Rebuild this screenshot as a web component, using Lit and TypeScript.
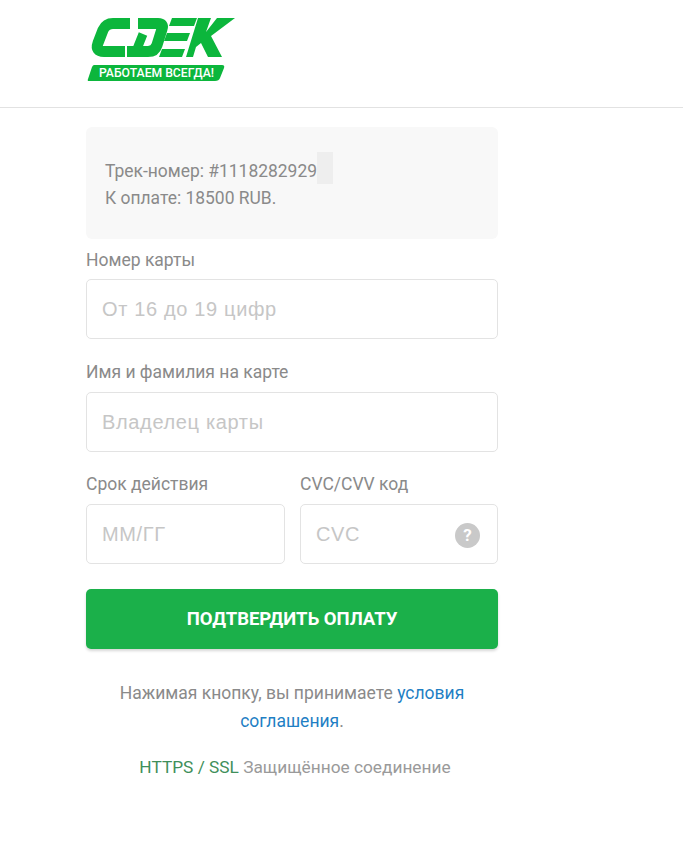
import { LitElement, html, css } from "lit";
import { customElement } from "lit/decorators.js";

@customElement("app-root")
export class AppRoot extends LitElement {
  static styles = css`
    :host { display: block; min-height: 849px; background: #fff; font-family: Roboto, "Noto Sans", sans-serif; color: #8a8a8a; font-size: 17.5px; }
    * { box-sizing: border-box; }
    .header { height: 108px; border-bottom: 1px solid #e2e2e2; padding: 16px 0 0 86px; }
    .logo { display: block; width: 150px; height: 67px; }
    .logo text { font-family: Roboto, sans-serif; font-weight: 500; font-size: 13px; fill: #fff; }
    .strokes { fill: none; stroke: #0cb63c; stroke-width: 11; stroke-linejoin: round; }
    .stem { fill: none; stroke: #0cb63c; stroke-width: 9; }
    .form { width: 412px; margin: 19px 0 0 86px; }
    .info { height: 112px; background: #f8f8f8; border-radius: 6px; padding: 31px 19px; line-height: 27px; font-size: 17.45px; }
    .sel { background: #eee; display: inline-block; width: 16px; height: 32px; vertical-align: top; margin-top: -6px; }
    label { display: block; line-height: 20px; }
    .f1 { margin-top: 11px; }
    .f1 + .input { margin-top: 9px; }
    .f2 { margin-top: 23px; }
    .input { height: 60px; margin-top: 10px; border: 1px solid #e3e3e3; border-radius: 5px; padding: 0 15px; display: flex; align-items: center; justify-content: space-between; font-family: "Liberation Sans", Arial, sans-serif; font-size: 20px; letter-spacing: 0.65px; color: #c6c6c6; }
    .row { display: grid; grid-template-columns: 199px 198px; gap: 15px; margin-top: 22px; }
    .q { width: 25px; height: 25px; border-radius: 50%; background: #c9c9c9; color: #fff; font-family: Roboto, sans-serif; font-weight: 700; font-size: 17px; letter-spacing: 0; display: flex; align-items: center; justify-content: center; margin: 2px 2px 0 0; }
    button { display: block; width: 100%; height: 60px; margin-top: 25px; background: #1bb04a; border: 0; border-radius: 5px; color: #fff; font: 700 18.5px Roboto, sans-serif; box-shadow: 0 2px 3px rgba(0,0,0,.16); padding: 0; }
    .note { margin-top: 30px; text-align: center; line-height: 28px; padding: 0 20px; }
    a { color: #1f7fc4; text-decoration: none; }
    .secure { margin-top: 18px; padding-left: 6px; text-align: center; line-height: 28px; font-size: 17.3px; color: #9a9a9a; }
    .ssl { color: #3f8f5a; }
  `;

  render() {
    return html`
      <div class="header">
        <svg class="logo" viewBox="0 0 150 67" role="img" aria-label="CDEK">
          <path class="strokes" d="M44 7.5H27Q20 7.5 17 14L12 27Q9 35.5 18 35.5H39"/>
          <path class="strokes" d="M52 7.5H72Q78 7.5 76 13L71 29Q69 35.5 62 35.5H41"/>
          <path class="stem" d="M51 33L57 18"/>
          <g fill="#0cb63c">
            <path d="M86 2H111L108 10H83ZM81 17H104L101 25H78ZM76 33H99L96 41H73Z"/>
            <path d="M112 2H125L120 16L131 2H149L125 20L136 41H122L115 27L110 31L107 41H100Z"/>
            <path d="M8 49H136Q139 49 138 52L134 62Q133 65 129 65H3Q1 65 2 63L6 51Q7 49 8 49Z"/>
          </g>
          <text x="13" y="61" textLength="115" lengthAdjust="spacingAndGlyphs">РАБОТАЕМ ВСЕГДА!</text>
        </svg>
      </div>
      <div class="form">
        <div class="info">Трек-номер: #1118282929<span class="sel"></span><br />К оплате: 18500 RUB.</div>
        <label class="f1">Номер карты</label>
        <div class="input">От 16 до 19 цифр</div>
        <label class="f2">Имя и фамилия на карте</label>
        <div class="input">Владелец карты</div>
        <div class="row">
          <div><label>Срок действия</label><div class="input">ММ/ГГ</div></div>
          <div><label>CVC/CVV код</label><div class="input">CVC<span class="q">?</span></div></div>
        </div>
        <button>ПОДТВЕРДИТЬ ОПЛАТУ</button>
        <div class="note">Нажимая кнопку, вы принимаете <a href="#">условия соглашения</a>.</div>
        <div class="secure"><span class="ssl">HTTPS / SSL</span> Защищённое соединение</div>
      </div>
    `;
  }
}
